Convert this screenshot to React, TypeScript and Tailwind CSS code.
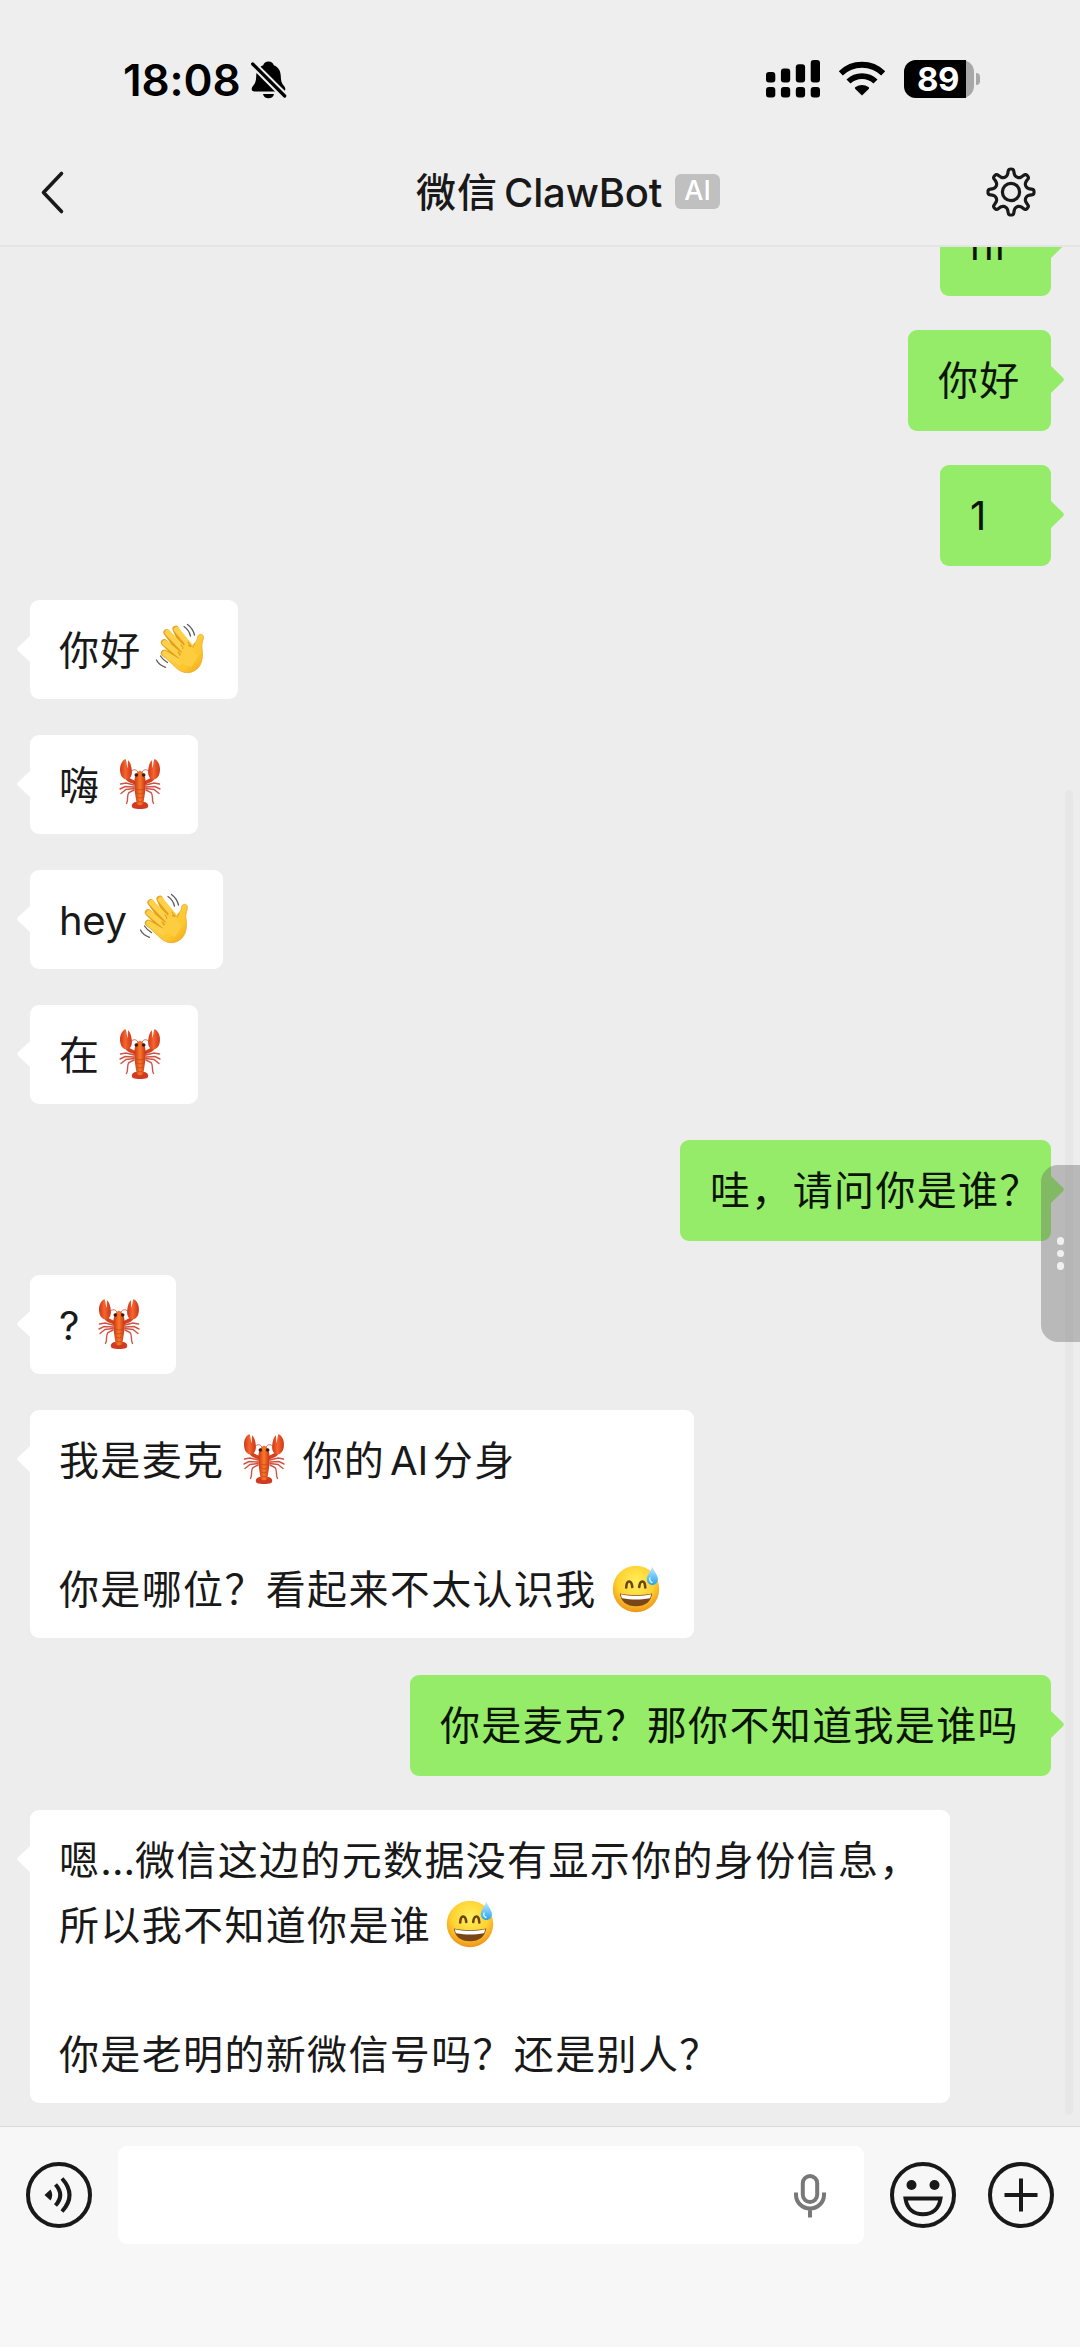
import type { ReactNode } from 'react';

const GEAR_PATH = (() => {
  const center = 26;
  const profile: Array<[number, number]> = [
    [-22.5, 16.4],
    [-13.5, 17.4],
    [-9.5, 19.6],
    [-6.8, 23.4],
    [-3.2, 24],
    [3.2, 24],
    [6.8, 23.4],
    [9.5, 19.6],
    [13.5, 17.4],
  ];
  const points: Array<[number, number]> = [];
  for (let tooth = 0; tooth < 8; tooth += 1) {
    for (const [offset, radius] of profile) {
      const angle = ((tooth * 45 + offset - 90) * Math.PI) / 180;
      points.push([center + radius * 0.96 * Math.cos(angle), center + radius * 0.96 * Math.sin(angle)]);
    }
  }
  const middle = (a: [number, number], b: [number, number]) => `${((a[0] + b[0]) / 2).toFixed(2)} ${((a[1] + b[1]) / 2).toFixed(2)}`;
  const last = points[points.length - 1];
  const curves = points.map((p, i) => `Q${p[0].toFixed(2)} ${p[1].toFixed(2)} ${middle(p, points[(i + 1) % points.length])}`);
  return `M${middle(last, points[0])}${curves.join('')}Z`;
})();

function BellOff() {
  return (
    <svg className="h-[40px] w-[37px]" viewBox="0 0 37 40">
      <path d="M18.5 1.5c-2.700 0-4.700 1.600-5.300 3.700C8.500 7 6.300 11.200 6.200 16.500 6 22.500 4.600 24 2.600 26.500 1 28.600 1.300 31.500 4.500 31.500h28c3.200 0 3.500-2.900 1.900-5-2-2.500-3.400-4-3.600-10C30.700 11.200 28.500 7 23.800 5.200c-.6-2.100-2.600-3.700-5.300-3.700Z" fill="#000" />
      <path d="M13 34h11c-.4 2.700-2.700 4.300-5.500 4.300S13.400 36.700 13 34Z" fill="#000" />
      <path d="M2 3.300L35.500 36.800" stroke="#eee" strokeWidth="7.400" />
      <path d="M2.700 4L34.700 36" stroke="#000" strokeWidth="3.200" strokeLinecap="round" />
    </svg>
  );
}

function Signal() {
  return (
    <svg className="h-[38px] w-[54px]" viewBox="0 0 54 38">
      {[12, 8.5, 4.2, 0].map((top, i) => (
        <g key={top}>
          <rect x={i * 14.9} y={top} width="9.300" height={22.6 - top} rx="3" />
          <rect x={i * 14.9} y="27" width="9.300" height="10.500" rx="3" />
        </g>
      ))}
    </svg>
  );
}

function Wifi() {
  return (
    <svg className="h-[36px] w-[48px]" viewBox="0 0 48 36">
      <path d="M24 34.500l-6.700-6.600c-.6-.6-.5-1.400.2-1.900 4-2.700 9-2.700 13 0 .7.500.8 1.300.2 1.900Z" />
      <path d="M10.500 20.500a19.500 19.500 0 0 1 27 0" fill="none" stroke="#000" strokeWidth="5.800" />
      <path d="M2.800 12.300a30.500 30.500 0 0 1 42.400 0" fill="none" stroke="#000" strokeWidth="5.800" />
    </svg>
  );
}

function Lobster() {
  return (
    <svg className="h-[52px] w-[55px] shrink-0" viewBox="0 0 55 52" role="img" aria-label="lobster">
      <defs>
        <linearGradient id="shell" x1="0" x2="1">
          <stop offset="0" stopColor="#cb3416" />
          <stop offset=".5" stopColor="#f97a26" />
          <stop offset="1" stopColor="#c92f17" />
        </linearGradient>
        <linearGradient id="claw" x1="0" x2="1">
          <stop offset="0" stopColor="#cf3518" />
          <stop offset=".45" stopColor="#f4652e" />
          <stop offset="1" stopColor="#cf3518" />
        </linearGradient>
      </defs>
      <g fill="none" stroke="#cf5344" strokeLinecap="round" strokeWidth="1.400">
        <path d="M22 27L14 25 8.500 26M22 29L13 28.500 8 31M22 30.500L14 31.500 9 35.500M22 32L17 34.500C14 38 17 41 14.500 45.500" />
        <path d="M34 27L42 25 47.500 26M34 29L43 28.500 48 31M34 30.500L42 31.500 47 35.500M34 32L39 34.500C42 38 39 41 41.500 45.500" />
        <path d="M26 14C24 10.500 21 11.500 18.500 13.500M30 14C32 10.500 35 11.500 37.500 13.500" strokeWidth=".9" />
      </g>
      <path d="M14.500 19C16 22.500 18.500 23 24 25M41.500 19C40 22.500 37.500 23 32 25" fill="none" stroke="#d5421f" strokeWidth="3.600" strokeLinecap="round" />
      <path d="M13.500 1C9 3 7.300 9 8.300 14.500c.8 4.700 3.700 7.300 7 6.800 3.300-.6 5-4 4.500-8.800C19.400 7.500 18 3.800 16 2.300L15.700 10C14.500 8 14.800 3.500 13.500 1Z" fill="url(#claw)" />
      <path d="M42.500 1C47 3 48.700 9 47.700 14.500c-.8 4.700-3.700 7.300-7 6.800-3.300-.6-5-4-4.500-8.800C36.600 7.500 38 3.800 40 2.300L40.300 10C41.500 8 41.200 3.500 42.500 1Z" fill="url(#claw)" />
      <path d="M24 44C19.500 44.500 18.500 49 21.500 50.300 24 51.200 32 51.200 34.500 50.300 37.500 49 36.500 44.500 32 44Z" fill="#cf3a22" />
      <path d="M28 12.500C23.500 14.500 22.300 20 22.300 26c0 7 1.500 13 2.400 20 1 1.700 5.600 1.700 6.600 0 .9-7 2.400-13 2.400-20 0-6-1.200-11.500-5.700-13.500Z" fill="url(#shell)" />
      <path d="M24 31Q28 33 32 31M24.500 35Q28 37 31.500 35M25 39Q28 41 31 39M25.500 43Q28 45 30.500 43" fill="none" stroke="#c64a17" strokeWidth=".8" />
      <circle cx="24.300" cy="17" r="1.800" fill="#3a1a18" />
      <circle cx="31.700" cy="17" r="1.800" fill="#3a1a18" />
    </svg>
  );
}

function Wave() {
  return (
    <svg className="h-[52px] w-[55px] shrink-0" viewBox="0 0 55 52" role="img" aria-label="waving hand">
      <defs>
        <linearGradient id="palm" x1="0" y1="0" x2="1" y2="1">
          <stop offset="0" stopColor="#ffd75a" />
          <stop offset=".7" stopColor="#fcc62e" />
          <stop offset="1" stopColor="#eda41a" />
        </linearGradient>
      </defs>
      <g fill="none" stroke="#e5a01d" strokeLinecap="round" strokeWidth="6.800">
        <path d="M31 27L21.800 6M27 29L12.800 9.500M23 32L10.300 19.500M23 38L10.300 30" />
      </g>
      <path d="M18 34L27 40 41 19.500C44 19 42.500 12.500 45.500 11.500c3-1 4.500 1.500 3.700 4.500-1 4-1.800 6-1.200 9.500C49 33 48.500 39 44.500 44.500 38 51.500 29 51 23 45.500L9.500 33Z" fill="url(#palm)" stroke="#e9aa25" strokeWidth=".8" />
      <g fill="none" stroke="#fed14a" strokeLinecap="round" strokeWidth="5.500">
        <path d="M37 24L22.500 6.500M32 29L13.500 9.500M28 34L11 19.800M25 39L11 30.500" />
      </g>
      <path d="M34 19L37 24 34.500 22.500M27 22L31 27 28.500 25.500M24 29L27.500 32.500 25 31.500" fill="none" stroke="#e3a11f" strokeWidth="1.200" strokeLinecap="round" />
      <path d="M31 20L44 33 37 44 24 39Z" fill="#fdcc3f" />
      <path d="M35.500 21L39 24.500 41 20.500" fill="none" stroke="#e7a923" strokeWidth="1" />
      <g fill="none" stroke="#5b5b5b" strokeLinecap="round" strokeWidth="1.300">
        <path d="M30 3.500C33 5.500 35.500 9 36.500 13M33.500 1.500C37 4 39.500 8 40.500 12" />
        <path d="M2.500 37C4 40 7.500 43 11.500 44.300M6.500 33C8.500 36 10.500 38 13.500 39.500" />
      </g>
    </svg>
  );
}

function Sweat() {
  return (
    <svg className="h-[52px] w-[55px] shrink-0" viewBox="0 0 55 52" role="img" aria-label="grinning face with sweat">
      <defs>
        <radialGradient id="face" cx=".5" cy=".35" r=".65">
          <stop offset="0" stopColor="#fff05a" />
          <stop offset=".6" stopColor="#ffd233" />
          <stop offset="1" stopColor="#ee9418" />
        </radialGradient>
        <linearGradient id="drop" x1="0" y1="0" x2="0" y2="1">
          <stop offset="0" stopColor="#c4ebff" />
          <stop offset="1" stopColor="#26a5ee" />
        </linearGradient>
      </defs>
      <circle cx="27" cy="26" r="23.200" fill="url(#face)" />
      <path d="M17.200 24.500C17.500 16.500 22.500 16.500 23.300 24M30.200 24C31 16.500 36 16.500 36.300 24.500" fill="none" stroke="#6b4312" strokeWidth="2.600" strokeLinecap="round" />
      <path d="M11 30.500C21 32.500 33 32.500 43 30.500 42.500 38.500 36 43.300 27 43.300S11.500 38.500 11 30.500Z" fill="#7a4517" />
      <path d="M12 31.300C21 33.300 33 33.300 42 31.300 41.800 33.500 41.500 34.800 40.800 35.200 31 37 23 37 13.200 35.200 12.500 34.800 12.200 33.500 12 31.300Z" fill="#fff" />
      <path d="M43.300 3.500C41.500 9 37.800 12 37.800 16c0 3.600 2.400 6 5.500 6 3.300 0 5.600-2.400 5.600-6C48.900 12 45.200 9 43.300 3.500Z" fill="url(#drop)" />
      <path d="M41 15c-.8 2 .2 4 2 4.500" fill="none" stroke="#e7f8ff" strokeWidth="1.300" strokeLinecap="round" />
    </svg>
  );
}

function Line({ children }: { children?: ReactNode }) {
  return <div className="flex h-[64.6px] items-center whitespace-pre">{children}</div>;
}

/* Text runs sit slightly below the emoji centre line. */
function T({ children }: { children: ReactNode }) {
  return <span className="mt-[3px]">{children}</span>;
}

const Gap = () => <span className="w-[12px] shrink-0" />;

function Received({ width, children }: { width: string; children: ReactNode }) {
  return (
    <div className="flex items-start">
      <svg className="mt-[36px] ml-[17px] h-[26px] w-[13px] shrink-0" viewBox="0 0 13 26">
        <path d="M13 0L1 11.300Q-.6 13 1 14.700L13 26Z" fill="#fff" />
      </svg>
      <div className={`${width} rounded-[9px] bg-white py-[17.2px] pl-[29px]`}>{children}</div>
    </div>
  );
}

function Sent({ width, children }: { width: string; children: ReactNode }) {
  return (
    <div className="flex items-start justify-end">
      <div className={`${width} h-[100.500px] shrink-0 rounded-[9px] bg-[#95ec69] py-[17.2px] pl-[30px] text-[#0b1407]`}>{children}</div>
      <svg className="mt-[36px] mr-[16px] h-[27px] w-[13px] shrink-0" viewBox="0 0 13 27">
        <path d="M0 0L12 11.800Q13.600 13.500 12 15.200L0 27Z" fill="#95ec69" />
      </svg>
    </div>
  );
}

function StatusBar() {
  return (
    <div className="flex h-[147px] items-start pt-[60px] text-black">
      <div className="ml-[123px] w-[127px] font-['Inter'] text-[44px] leading-[41px] font-semibold tracking-[-0.1px]">18:08</div>
      <BellOff />
      <div className="ml-auto flex w-[314px] items-start">
        <Signal />
        <div className="mt-[1px] ml-[18px]">
          <Wifi />
        </div>
        <div className="ml-[18px] flex items-center">
          <div className="flex h-[38px] w-[70px] rounded-[12px] bg-[#a8a8a8]">
            <div className="w-[62px] rounded-l-[12px] bg-black pl-[13px] font-['Inter'] text-[33px] leading-[38px] font-bold tracking-[-0.6px] text-white">89</div>
          </div>
          <div className="ml-[2px] h-[12px] w-[4px] rounded-r-[4px] bg-[#a8a8a8]" />
        </div>
      </div>
    </div>
  );
}

function TitleBar() {
  return (
    <div className="flex h-[98px] items-start text-[#191919]">
      <svg className="mt-[23px] ml-[39px] h-[45px] w-[26px]" viewBox="0 0 26 45">
        <path d="M22.500 3.500L4.500 22.500L22.500 41.500" fill="none" stroke="#191919" strokeWidth="3.600" strokeLinecap="round" strokeLinejoin="round" />
      </svg>
      <div className="ml-[351px] flex h-[92px] w-[259px] items-center text-[40px] font-medium whitespace-nowrap">
        <span className="tracking-[1px]">微信</span>
        <span className="ml-[6px] font-['Inter'] text-[40px] tracking-[-0.15px]">ClawBot</span>
      </div>
      <div className="mt-[27px] flex h-[35px] w-[45px] items-center justify-center rounded-[6px] bg-[#c0c0c0] font-['Inter'] text-[27px] font-medium text-white">AI</div>
      <svg className="mt-[19px] ml-[265px] h-[52px] w-[52px]" viewBox="0 0 52 52" fill="none" stroke="#191919" strokeWidth="3.200" strokeLinejoin="round">
        <path d={GEAR_PATH} />
        <circle cx="26" cy="26" r="8.600" />
      </svg>
    </div>
  );
}

function InputBar() {
  return (
    <div className="flex flex-1 items-start border-t border-[#d9d9d9] bg-[#f7f7f7] pt-[19px]">
      <svg className="mt-[15px] ml-[25px] h-[68px] w-[68px]" viewBox="0 0 68 68" fill="none" stroke="#191919" strokeWidth="4">
        <circle cx="34" cy="34" r="31" />
        <path d="M19.500 34L25.500 28.500Q29 34 25.500 39.500Z" fill="#191919" stroke="none" />
        <path d="M30.500 23.500Q40 34 30.500 44.500M37 17.500Q52 34 37 50.500" />
      </svg>
      <div className="ml-[25px] flex h-[98px] w-[746px] justify-end rounded-[9px] bg-white">
        <svg className="mt-[27px] mr-[36px] h-[46px] w-[36px]" viewBox="0 0 36 46" fill="none" stroke="#787878" strokeWidth="4">
          <rect x="10.800" y="3" width="14.400" height="26" rx="7.200" />
          <path d="M4 19.500V22a14 13.500 0 0 0 28 0V19.500M18 35.500V44.500" />
        </svg>
      </div>
      <svg className="mt-[15px] ml-[25px] h-[68px] w-[68px]" viewBox="0 0 68 68" fill="none" stroke="#191919" strokeWidth="4">
        <circle cx="34" cy="34" r="31" />
        <circle cx="22.500" cy="24" r="5" fill="#191919" stroke="none" />
        <circle cx="45.500" cy="24" r="5" fill="#191919" stroke="none" />
        <path d="M16.500 37.500H51.500C50 48 43.500 53.300 34 53.300S18 48 16.500 37.500Z" />
      </svg>
      <svg className="mt-[15px] ml-[30px] h-[68px] w-[68px]" viewBox="0 0 68 68" fill="none" stroke="#191919" strokeWidth="4">
        <circle cx="34" cy="34" r="31" />
        <path d="M34 17.500V50.500M17.500 34H50.500" />
      </svg>
    </div>
  );
}

export default function App() {
  return (
    <div className="relative flex h-[2347px] w-[1080px] flex-col overflow-hidden bg-[#ededed] font-['Inter','Noto_Sans_CJK_SC',sans-serif] text-[40px] text-[#191919]">
      <header className="h-[247px] shrink-0 border-b-2 border-[#e4e4e4] bg-[#eeeeee]">
        <StatusBar />
        <TitleBar />
      </header>
      <main className="flex h-[1879px] shrink-0 flex-col overflow-hidden tracking-[1.350px]">
        <div className="-mt-[52px] flex flex-col gap-[35px]">
          <div className="h-[100px]">
            <Sent width="w-[111px]">
              <Line><T>hi</T></Line>
            </Sent>
          </div>
          <div className="h-[100px]">
            <Sent width="w-[143px]">
              <Line><T>你好</T></Line>
            </Sent>
          </div>
          <div className="h-[100px]">
            <Sent width="w-[111px]">
              <Line><T>1</T></Line>
            </Sent>
          </div>
          <div className="h-[100px]">
            <Received width="w-[208px]">
              <Line><T>你好</T><Gap /><Wave /></Line>
            </Received>
          </div>
          <div className="h-[100px]">
            <Received width="w-[167.500px]">
              <Line><T>嗨</T><Gap /><Lobster /></Line>
            </Received>
          </div>
          <div className="h-[100px]">
            <Received width="w-[192.500px]">
              <Line><span className="mt-[3px] tracking-[-0.4px]">hey</span><Gap /><Wave /></Line>
            </Received>
          </div>
          <div className="h-[100px]">
            <Received width="w-[167.500px]">
              <Line><T>在</T><Gap /><Lobster /></Line>
            </Received>
          </div>
          <div className="h-[100px]">
            <Sent width="w-[371px]">
              <Line><T>哇，请问你是谁？</T></Line>
            </Sent>
          </div>
          <div className="h-[100px]">
            <Received width="w-[146px]">
              <Line><span className="mt-[3px] tracking-[0px]">?</span><Gap /><Lobster /></Line>
            </Received>
          </div>
          <div className="h-[230px]">
            <Received width="w-[664px]">
              <Line><T>我是麦克</T><Gap /><Lobster /><span className="w-[11px]" /><T>你的</T><span className="mx-[5px] mt-[3px] tracking-[-0.3px]">AI</span><T>分身</T></Line>
              <Line />
              <Line><T>你是哪位？看起来不太认识我</T><Gap /><Sweat /></Line>
            </Received>
          </div>
          <div className="h-[100px]">
            <Sent width="w-[641px]">
              <Line><T>你是麦克？那你不知道我是谁吗</T></Line>
            </Sent>
          </div>
          <Received width="w-[920px]">
            <Line><T>嗯</T><span className="mt-[3px] tracking-[0px]">...</span><T>微信这边的元数据没有显示你的身份信息，</T></Line>
            <Line><T>所以我不知道你是谁</T><Gap /><Sweat /></Line>
            <Line />
            <Line><T>你是老明的新微信号吗？还是别人？</T></Line>
          </Received>
        </div>
      </main>
      <InputBar />
      <div className="absolute top-[790px] right-[7px] h-[1325px] w-[8px] rounded-full bg-black/[0.025]" />
      <div className="absolute top-[1165px] right-0 flex h-[177px] w-[39px] flex-col items-center justify-center gap-[5px] rounded-l-[17px] bg-[#5f5f5f]/36">
        <span className="h-[7.500px] w-[7.500px] rounded-full bg-[#f0f0f0]" />
        <span className="h-[7.500px] w-[7.500px] rounded-full bg-[#f0f0f0]" />
        <span className="h-[7.500px] w-[7.500px] rounded-full bg-[#f0f0f0]" />
      </div>
    </div>
  );
}
